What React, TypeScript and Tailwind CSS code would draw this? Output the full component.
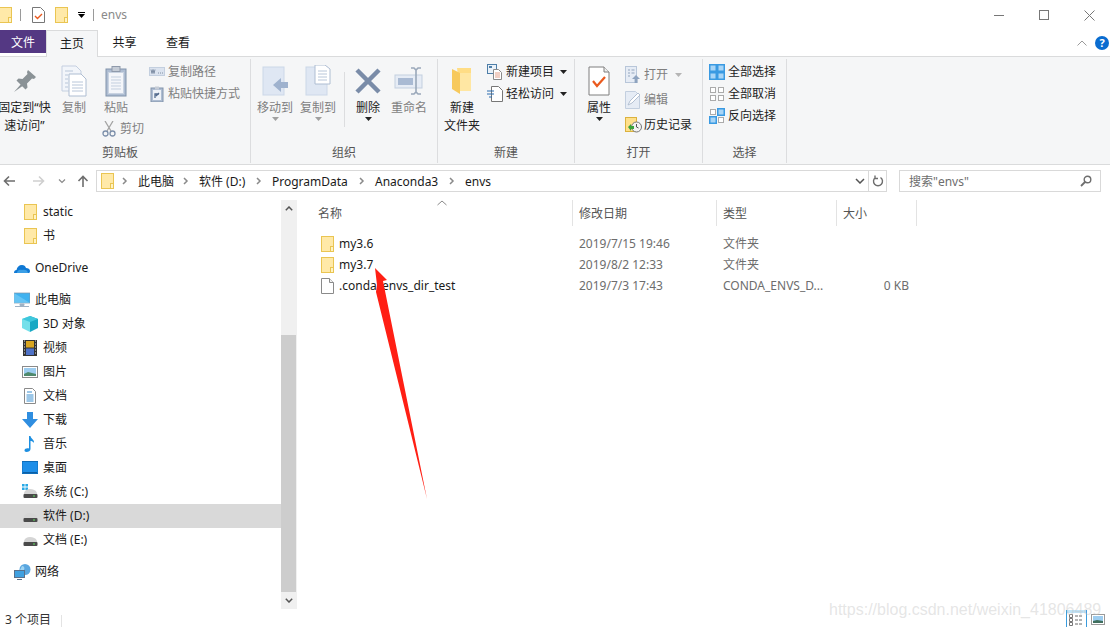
import type { ReactNode } from "react";

const Folder = ({ className = "" }: { className?: string }) => (
  <svg viewBox="0 0 13 16" className={`h-4 w-[13px] shrink-0 ${className}`}>
    <rect x="0.5" y="0.5" width="12" height="15" fill="#ffe9a8" stroke="#eac552" />
    <rect x="9.5" y="10.5" width="3" height="5" fill="#fff3c4" stroke="#eac552" />
  </svg>
);

const Caret = ({ color = "#222" }: { color?: string }) => (
  <svg viewBox="0 0 7 4" className="h-1 w-[7px]">
    <path d="M0 0h7L3.5 4z" fill={color} />
  </svg>
);

const Chevron = ({ color = "#8a8a8a" }: { color?: string }) => (
  <svg viewBox="0 0 6 8" className="h-2 w-1.5">
    <path d="M1 1l3 3-3 3" fill="none" stroke={color} strokeWidth="1.5" />
  </svg>
);

const Pin = () => (
  <svg viewBox="0 0 24 24" className="h-6 w-6">
    <path d="M1 23l8-9 2 2z" fill="#8a9296" />
    <path d="M15 1l8 7-2 2-2-.5-5 5 .5 4-2 2-9-9 2-2 4 .5 5-5-.5-2z" fill="#8a9296" />
  </svg>
);

const CopyDoc = () => (
  <svg viewBox="0 0 26 32" className="h-8 w-[26px]">
    <path d="M1 1h14l5 5v20H1z" fill="#f2f5fa" stroke="#c4cfe0" />
    <path d="M8 9h12l5 5v17H8z" fill="#fff" stroke="#aebdd2" />
    <path d="M4 6h8M4 10h3M4 14h3M4 18h3M4 22h3M11 17h11M11 20h11M11 23h11M11 26h11" stroke="#b8c6d9" />
  </svg>
);

const Clipboard = () => (
  <svg viewBox="0 0 22 32" className="h-8 w-[22px]">
    <rect x="1" y="4" width="20" height="27" fill="#aebdd2" stroke="#8193ab" />
    <rect x="3.5" y="7.5" width="15" height="21" fill="#f4f6fa" stroke="#c9d3e1" />
    <rect x="7" y="1.5" width="8" height="5" fill="#c5ccd6" stroke="#8f9aab" />
    <path d="M6 12h10M6 15h10M6 18h10M6 21h10M6 24h10" stroke="#c3cfdf" />
  </svg>
);

const MoveTo = ({ copy = false }: { copy?: boolean }) => (
  <svg viewBox="0 0 28 32" className="h-8 w-7">
    <rect x="2" y="2" width="21" height="28" fill="#dfe7f3" stroke="#ccd7e8" />
    {copy ? (
      <>
        <path d="M11 0h10l5 4v15H11z" fill="#fff" stroke="#aebdd2" />
        <path d="M14 6h9M14 9h9M14 12h9M14 15h9" stroke="#b8c6d9" />
      </>
    ) : (
      <path d="M12 20l8-7v4h7v6h-7v4z" fill="#9fb2ce" />
    )}
  </svg>
);

const DeleteX = () => (
  <svg viewBox="0 0 26 26" className="h-[26px] w-[26px]">
    <path d="M2 2l22 22M24 2L2 24" stroke="#7a8ca8" strokeWidth="4.5" />
  </svg>
);

const Rename = () => (
  <svg viewBox="0 0 30 28" className="h-7 w-[30px]">
    <rect x="1" y="8" width="27" height="13" fill="#e6ecf5" stroke="#c3cfdf" />
    <rect x="4" y="11" width="15" height="7" fill="#a9bad3" />
    <path d="M17 1h3l2 2 2-2h3M22 3v22M17 27h3l2-2 2 2h3" fill="none" stroke="#9aa8ba" strokeWidth="1.6" />
  </svg>
);

const BigFolder = () => (
  <svg viewBox="0 0 20 28" className="h-7 w-5">
    <path d="M5 1h14v23H8z" fill="#ffdd85" />
    <path d="M0 2l8 4v21l-8-5z" fill="#f7c95c" />
    <path d="M8 6l11 0v18H8z" fill="#ffe7a3" />
  </svg>
);

const Properties = () => (
  <svg viewBox="0 0 22 30" className="h-[30px] w-[22px]">
    <path d="M1 1h15l5 5v23H1z" fill="#fff" stroke="#7f7f7f" />
    <path d="M16 1v5h5" fill="#eee" stroke="#7f7f7f" />
    <path d="M5 15l4 5 8-9" fill="none" stroke="#ea5a1e" strokeWidth="2.2" />
  </svg>
);

const CheckDoc = () => (
  <svg viewBox="0 0 13 16" className="h-4 w-[13px]">
    <path d="M.5.5h8l4 4v11H.5z" fill="#fff" stroke="#777" />
    <path d="M3 9l2.5 2.5L10 7" fill="none" stroke="#ea5a1e" strokeWidth="1.4" />
  </svg>
);

const Cell = ({ x, y, on }: { x: number; y: number; on: boolean }) =>
  on ? (
    <rect x={x + 0.75} y={y + 0.75} width="6.5" height="6.5" fill="#a9d5f6" stroke="#3a9ae2" strokeWidth="1.5" />
  ) : (
    <rect x={x + 1.5} y={y + 1.5} width="5" height="5" fill="#fff" stroke="#ababab" />
  );

const Small = ({ kind }: { kind: string }) => {
  if (kind === "path")
    return (
      <svg viewBox="0 0 16 16" className="h-4 w-4">
        <rect x="0.5" y="3.5" width="15" height="8" fill="#dbe3ef" stroke="#c3cfdf" />
        <path d="M2 5.5l1 4 1-4 1 4 1-4M9 9h1M11 9h1M13 9h1" fill="none" stroke="#6a7b93" strokeWidth="0.8" />
      </svg>
    );
  if (kind === "shortcut")
    return (
      <svg viewBox="0 0 16 16" className="h-4 w-4">
        <rect x="2" y="2" width="12" height="14" fill="#aebdd2" stroke="#8193ab" />
        <rect x="4" y="4" width="8" height="10" fill="#eef2f7" />
        <path d="M6 12V8h4M7 10l3-3" fill="none" stroke="#51698c" strokeWidth="1.3" />
        <rect x="6" y="0.5" width="4" height="3" fill="#c5ccd6" />
      </svg>
    );
  if (kind === "cut")
    return (
      <svg viewBox="0 0 16 16" className="h-4 w-4">
        <path d="M4 0l6 10M12 0L6 10" stroke="#a4a4a4" strokeWidth="1.3" />
        <circle cx="4.5" cy="12.5" r="2.5" fill="none" stroke="#7d90ab" strokeWidth="1.3" />
        <circle cx="11.5" cy="12.5" r="2.5" fill="none" stroke="#7d90ab" strokeWidth="1.3" />
      </svg>
    );
  if (kind === "newitem")
    return (
      <svg viewBox="0 0 16 16" className="h-4 w-4">
        <rect x="0.5" y="0.5" width="9" height="9" fill="#eaf1f8" stroke="#4d7ea8" />
        <rect x="2" y="2" width="3" height="2" fill="#4d7ea8" />
        <path d="M6.5 5.5h5l3 3v7h-8z" fill="#fff" stroke="#8a8a8a" />
        <path d="M8 9h5M8 11h5M8 13h5" stroke="#e4a08a" />
      </svg>
    );
  if (kind === "easy")
    return (
      <svg viewBox="0 0 16 16" className="h-4 w-4">
        <path d="M4.5 0.5h7l4 4v11h-11z" fill="#fff" stroke="#777" />
        <path d="M0 5h7M0 8h7M2 11h3" stroke="#2a6cb0" strokeWidth="1" />
      </svg>
    );
  if (kind === "open")
    return (
      <svg viewBox="0 0 16 18" className="h-[18px] w-4">
        <rect x="0.5" y="0.5" width="11" height="16" fill="#e6ecf5" stroke="#b8c6d9" />
        <path d="M3 4h2M6.5 4h3M3 7h2M6.5 7h3M3 10h2" stroke="#93a5bd" />
        <path d="M11 9l4 4h-2.4v4h-3v-4H7z" fill="#8ea3bf" />
      </svg>
    );
  if (kind === "edit")
    return (
      <svg viewBox="0 0 16 18" className="h-[18px] w-4">
        <path d="M.5.5h10l4 4v13H.5z" fill="#e6ecf5" stroke="#c3cfdf" />
        <path d="M3 14l2-4 8-8 2 2-8 8z" fill="#fff" stroke="#b3c0d2" />
      </svg>
    );
  if (kind === "history")
    return (
      <svg viewBox="0 0 17 16" className="h-4 w-[17px] -mr-px">
        <rect x="0.5" y="0.5" width="11" height="14" fill="#ffe08a" stroke="#dbb23f" />
        <circle cx="11.5" cy="10" r="5" fill="#f2f2f2" stroke="#777" />
        <path d="M11.5 7v3l2 1" fill="none" stroke="#555" />
        <path d="M3 10l3-3v2h3v3H6v2z" fill="#3aa23a" />
      </svg>
    );
  return (
    <svg viewBox="0 0 16 16" className="h-4 w-4">
      <Cell x={0} y={0} on={kind === "all"} />
      <Cell x={8} y={0} on={kind !== "none"} />
      <Cell x={0} y={8} on={kind !== "none"} />
      <Cell x={8} y={8} on={kind === "all"} />
    </svg>
  );
};

const Large = ({ icon, lines, width, dark, caret }: { icon: ReactNode; lines: string[]; width: string; dark?: boolean; caret?: string }) => (
  <div className={`flex shrink-0 flex-col items-center ${width}`}>
    <div className="flex h-[37px] items-center justify-center">{icon}</div>
    {lines.map((l) => (
      <span key={l} className={`h-[18px] whitespace-nowrap leading-[18px] ${dark ? "text-[#222]" : "text-[#7f7f7f]"}`}>
        {l}
      </span>
    ))}
    {caret && <Caret color={caret} />}
  </div>
);

const Item = ({ kind, label, dark, h = "h-[22px]", children }: { kind: string; label: string; dark?: boolean; h?: string; children?: ReactNode }) => (
  <div className={`flex items-center gap-[3px] whitespace-nowrap ${h} ${dark ? "text-[#222]" : "text-[#7f7f7f]"}`}>
    <Small kind={kind} />
    <span>{label}</span>
    {children}
  </div>
);

const Group = ({ label, width, pad = "", children }: { label: string; width: string; pad?: string; children: ReactNode }) => (
  <section className={`flex h-[104px] shrink-0 flex-col border-r border-[#dcdddf] ${width}`}>
    <div className="flex h-[84px] pt-[3px]">{children}</div>
    <div className={`text-center leading-[20px] text-[#555] ${pad}`}>{label}</div>
  </section>
);

const crumbs = [
  { label: "此电脑", w: "w-[61px]" },
  { label: "软件 (D:)", w: "w-[73px]" },
  { label: "ProgramData", w: "w-[103px]" },
  { label: "Anaconda3", w: "w-[90px]" },
  { label: "envs", w: "w-[60px]" },
];

const Drive = ({ win }: { win?: boolean }) => (
  <svg viewBox="0 0 16 16" className="h-4 w-4">
    {win && <path d="M0 0h2.6v2.6H0zM3.4 0H6v2.6H3.4zM0 3.4h2.6V6H0zM3.4 3.4H6V6H3.4z" fill="#29a9e6" />}
    <path d="M2 9c1-3 3-4 6-4s6 1 7 4v1H2z" fill="#d5d5d5" />
    <rect x="1.5" y="10" width="14" height="4" rx="1" fill="#4a4a4a" />
    <rect x="11" y="11.5" width="2" height="1" fill="#5fe05f" />
  </svg>
);

const navIcons: Record<string, ReactNode> = {
  onedrive: (
    <svg viewBox="0 0 16 16" className="h-4 w-4">
      <path d="M0 13c0-2 1-3 2.5-3C3 7 5 5 8 5c2 0 3.500 1 4 3 2 0 4 1 4 3s-1 2-2 2z" fill="#0f78d4" />
      <path d="M3 13c0-2 2-4 5-3 2-1 6 0 6 3z" fill="#3b9fe6" />
    </svg>
  ),
  pc: (
    <svg viewBox="0 0 16 16" className="h-4 w-4">
      <rect x="0" y="1" width="16" height="10" fill="#3fb2f0" stroke="#7c93a8" strokeWidth="0.7" />
      <path d="M0 11h16L0 1z" fill="#7fd0f7" opacity="0.6" />
      <path d="M6 12h4v1.500H6zM1 14.500h14" stroke="#9fb2c4" fill="#9fb2c4" />
    </svg>
  ),
  cube: (
    <svg viewBox="0 0 16 16" className="h-4 w-4">
      <path d="M8 0l8 3v9l-8 4z" fill="#19a9c4" />
      <path d="M8 0L0 3v9l8 4z" fill="#74e0ea" />
      <path d="M0 3l8 3 8-3-8-3z" fill="#3fc7dc" />
    </svg>
  ),
  video: (
    <svg viewBox="0 0 16 16" className="h-4 w-4">
      <rect x="1" y="0" width="14" height="16" fill="#333" />
      <rect x="4" y="1" width="8" height="6.500" fill="#d9a520" />
      <rect x="4" y="8.500" width="8" height="6.500" fill="#4f72c8" />
      <path d="M2 1h1M2 4h1M2 7h1M2 10h1M2 13h1M13 1h1M13 4h1M13 7h1M13 10h1M13 13h1" stroke="#ddd" />
    </svg>
  ),
  picture: (
    <svg viewBox="0 0 16 16" className="h-4 w-4">
      <rect x="0.500" y="2.500" width="15" height="11" fill="#fff" stroke="#8a8a8a" />
      <rect x="2" y="4" width="12" height="8" fill="#9dcdf0" />
      <path d="M2 10l4-2 8 2v2H2z" fill="#4f8a6d" />
    </svg>
  ),
  doc: (
    <svg viewBox="0 0 16 16" className="h-4 w-4">
      <path d="M2.500.5h8l3 3v12h-11z" fill="#fff" stroke="#8a8a8a" />
      <path d="M5 4h5M4.500 7h7M4.500 9h7M4.500 11h7M4.500 13h7" stroke="#3a8fd0" />
    </svg>
  ),
  download: (
    <svg viewBox="0 0 16 16" className="h-4 w-4">
      <path d="M5 0h6v7h5l-8 9-8-9h5z" fill="#2f8ee0" />
    </svg>
  ),
  music: (
    <svg viewBox="0 0 16 16" className="h-4 w-4">
      <path d="M7 0h1.500c.3 3 4 3.500 3.500 7-1-1.500-2.500-2-3.500-2v8c0 2-2 3-4 3-1.500 0-2-1-2-1.500C2.500 12.500 5 12 7 12.500z" fill="#1d8fe1" />
    </svg>
  ),
  desktop: (
    <svg viewBox="0 0 16 16" className="h-4 w-4">
      <rect x="0" y="1.500" width="16" height="12" fill="#1f8fe8" stroke="#0f6db8" />
      <rect x="1" y="12" width="14" height="1" fill="#0b5fa5" />
    </svg>
  ),
  net: (
    <svg viewBox="0 0 18 16" className="h-4 w-[18px]">
      <circle cx="11" cy="5.500" r="5.500" fill="#5aa7e0" />
      <path d="M8 2c2 0 3 2 2 4s-3 1-4 0z" fill="#9fd4f2" />
      <rect x="0.500" y="6.500" width="10" height="7" fill="#3fa0e0" stroke="#58708c" />
      <path d="M3 15.500h5" stroke="#58708c" />
    </svg>
  ),
};

const tree = [
  { label: "static", icon: <Folder className="ml-0.5" />, pl: "pl-[22px]" },
  { label: "书", icon: <Folder className="ml-0.5" />, pl: "pl-[22px]" },
  { label: "OneDrive", icon: navIcons.onedrive, pl: "pl-3.5", mt: "mt-2" },
  { label: "此电脑", icon: navIcons.pc, pl: "pl-3.5", mt: "mt-2" },
  { label: "3D 对象", icon: navIcons.cube, pl: "pl-[22px]" },
  { label: "视频", icon: navIcons.video, pl: "pl-[22px]" },
  { label: "图片", icon: navIcons.picture, pl: "pl-[22px]" },
  { label: "文档", icon: navIcons.doc, pl: "pl-[22px]" },
  { label: "下载", icon: navIcons.download, pl: "pl-[22px]" },
  { label: "音乐", icon: navIcons.music, pl: "pl-[22px]" },
  { label: "桌面", icon: navIcons.desktop, pl: "pl-[22px]" },
  { label: "系统 (C:)", icon: <Drive win />, pl: "pl-[22px]" },
  { label: "软件 (D:)", icon: <Drive />, pl: "pl-[22px]", active: true },
  { label: "文档 (E:)", icon: <Drive />, pl: "pl-[22px]" },
  { label: "网络", icon: navIcons.net, pl: "pl-3.5", mt: "mt-2" },
];

const files = [
  { name: "my3.6", date: "2019/7/15 19:46", type: "文件夹", size: "" },
  { name: "my3.7", date: "2019/8/2 12:33", type: "文件夹", size: "" },
  { name: ".conda_envs_dir_test", date: "2019/7/3 17:43", type: "CONDA_ENVS_D...", size: "0 KB", plain: true },
];

export default function App() {
  return (
    <div className="relative flex h-[627px] w-[1110px] flex-col overflow-hidden bg-white font-['Noto_Sans','Noto_Sans_CJK_SC',sans-serif] text-[12px] text-[#1a1a1a]">
      {/* title bar */}
      <div className="flex h-[30px] shrink-0 items-center">
        <Folder className="-ml-[1px]" />
        <span className="ml-2 h-3 w-px bg-[#9a9a9a]" />
        <span className="ml-[11px]"><CheckDoc /></span>
        <Folder className="ml-2.5" />
        <span className="ml-2.5 flex flex-col items-center gap-px">
          <span className="h-px w-[7px] bg-black" />
          <Caret color="#000" />
        </span>
        <span className="ml-2 h-3 w-px bg-[#9a9a9a]" />
        <span className="ml-[7px] text-[#8a8a8a]">envs</span>
        <div className="ml-auto flex items-center pr-[15px]">
          <span className="h-px w-2.5 bg-[#777]" />
          <span className="ml-[35px] h-2.5 w-2.5 border border-[#777]" />
          <svg viewBox="0 0 11 11" className="ml-[35px] h-[11px] w-[11px]">
            <path d="M.5.5l10 10M10.500.5l-10 10" stroke="#777" />
          </svg>
        </div>
      </div>

      {/* tabs */}
      <div className="flex h-[27px] shrink-0 border-b border-[#dadbdc]">
        <div className="flex h-[23px] w-[46px] items-center justify-center bg-[#543883] pt-[3px] text-white">文件</div>
        <div className="flex h-[27px] w-[52px] items-center justify-center border-x border-t border-[#dadbdc] bg-[#f5f6f7]">主页</div>
        <div className="flex h-[26px] w-[53px] items-center justify-center">共享</div>
        <div className="flex h-[26px] w-[54px] items-center justify-center">查看</div>
        <div className="ml-auto flex h-[26px] items-center gap-2 pr-px">
          <svg viewBox="0 0 10 6" className="h-1.5 w-2.5">
            <path d="M.5 5.500L5 1l4.500 4.500" fill="none" stroke="#9a9a9a" />
          </svg>
          <span className="flex h-3.5 w-3.5 items-center justify-center rounded-full bg-[#0a6cd0] text-[11px] font-bold text-white">?</span>
        </div>
      </div>

      {/* ribbon */}
      <div className="flex h-[108px] shrink-0 items-start border-b border-[#dadbdc] bg-[#f5f6f7] pt-0.5">
        <Group label="剪贴板" width="w-[251px]" pad="pr-2.5">
          <Large width="w-[49px]" dark icon={<Pin />} lines={["固定到“快", "速访问”"]} />
          <Large width="w-[50px]" icon={<CopyDoc />} lines={["复制"]} />
          <div className="flex w-[50px] shrink-0 flex-col">
            <Large width="w-[34px]" icon={<Clipboard />} lines={["粘贴"]} />
            <Item kind="cut" label="剪切" h="h-[22px] mt-px ml-[2px]" />
          </div>
          <div className="-mt-px flex flex-col">
            <Item kind="path" label="复制路径" />
            <Item kind="shortcut" label="粘贴快捷方式" />
          </div>
        </Group>
        <Group label="组织" width="w-[187px]">
          <Large width="w-[48px]" icon={<MoveTo />} lines={["移动到"]} caret="#a0a0a0" />
          <Large width="w-[38px]" icon={<MoveTo copy />} lines={["复制到"]} caret="#a0a0a0" />
          <span className="ml-[7px] mt-2.5 h-[55px] w-px bg-[#dcdddf]" />
          <div className="-ml-px">
            <Large width="w-[48px]" dark icon={<DeleteX />} lines={["删除"]} caret="#222" />
          </div>
          <Large width="w-[34px]" icon={<Rename />} lines={["重命名"]} />
        </Group>
        <Group label="新建" width="w-[137px]">
          <Large width="w-[48px]" dark icon={<BigFolder />} lines={["新建", "文件夹"]} />
          <div className="-mt-px flex flex-col pl-px">
            <Item kind="newitem" label="新建项目" dark>
              <span className="ml-[3px]"><Caret /></span>
            </Item>
            <Item kind="easy" label="轻松访问" dark>
              <span className="ml-[3px]"><Caret /></span>
            </Item>
          </div>
        </Group>
        <Group label="打开" width="w-[128px]">
          <Large width="w-[48px]" dark icon={<Properties />} lines={["属性"]} caret="#222" />
          <div className="flex flex-col pl-0.5">
            <Item kind="open" label="打开" h="h-[25px]">
              <span className="ml-1"><Caret color="#b5b5b5" /></span>
            </Item>
            <Item kind="edit" label="编辑" h="h-[25px]" />
            <Item kind="history" label="历史记录" dark h="h-[25px]" />
          </div>
        </Group>
        <Group label="选择" width="w-[84px]">
          <div className="-mt-px flex flex-col pl-1.5">
            <Item kind="all" label="全部选择" dark />
            <Item kind="none" label="全部取消" dark />
            <Item kind="invert" label="反向选择" dark />
          </div>
        </Group>
      </div>

      {/* address bar */}
      <div className="flex h-[31px] shrink-0 items-start pt-[5px]">
        <div className="flex h-[22px] w-[96px] shrink-0 items-center">
          <svg viewBox="0 0 12 12" className="ml-[3px] h-3 w-3">
            <path d="M6 1.500L1.500 6 6 10.500M1.500 6H12" fill="none" stroke="#6e6e6e" strokeWidth="1.6" />
          </svg>
          <svg viewBox="0 0 12 12" className="ml-[18px] h-3 w-3">
            <path d="M6 1.500L10.500 6 6 10.500M10.500 6H0" fill="none" stroke="#cfcfcf" strokeWidth="1.6" />
          </svg>
          <svg viewBox="0 0 8 5" className="ml-[13px] h-[5px] w-2">
            <path d="M1 .5l3 3 3-3" fill="none" stroke="#8a8a8a" strokeWidth="1.2" />
          </svg>
          <svg viewBox="0 0 12 12" className="ml-[11px] h-3 w-3">
            <path d="M1.500 6L6 1.500 10.500 6M6 1.500V12" fill="none" stroke="#6e6e6e" strokeWidth="1.6" />
          </svg>
        </div>
        <div className="flex h-[22px] w-[791px] shrink-0 items-center border border-[#d9d9d9]">
          <Folder className="ml-1" />
          <div className="ml-[5px] flex items-center">
            {crumbs.map((c) => (
              <div key={c.label} className={`flex items-center ${c.w}`}>
                <span className="flex w-[19px] shrink-0 pl-[3px]">
                  <Chevron />
                </span>
                <span className="whitespace-nowrap pt-px">{c.label}</span>
              </div>
            ))}
          </div>
          <div className="ml-auto flex h-full items-center">
            <svg viewBox="0 0 10 6" className="mr-[3px] h-1.5 w-2.5">
              <path d="M1 1l4 4 4-4" fill="none" stroke="#555" strokeWidth="1.5" />
            </svg>
            <div className="flex h-full w-[18px] items-center justify-center border-l border-[#d9d9d9]">
              <svg viewBox="0 0 12 12" className="h-3 w-3">
                <path d="M3.500 2.500a4.500 4.500 0 1 0 5 0M3 .5v3h3" fill="none" stroke="#6e6e6e" strokeWidth="1.4" />
              </svg>
            </div>
          </div>
        </div>
        <div className="ml-3 flex h-[22px] w-[202px] shrink-0 items-center justify-between border border-[#d9d9d9] pl-[9px] pr-2 text-[#6e6e6e]">
          <span className="pt-px">搜索"envs"</span>
          <svg viewBox="0 0 12 12" className="h-3 w-3">
            <circle cx="7.500" cy="4.500" r="3.300" fill="none" stroke="#6e6e6e" strokeWidth="1.4" />
            <path d="M5 7l-4 4" stroke="#6e6e6e" strokeWidth="1.8" />
          </svg>
        </div>
      </div>

      {/* main */}
      <div className="flex h-[414px] shrink-0 pt-1">
        <nav className="w-[281px] shrink-0">
          {tree.map((t) => (
            <div key={t.label} className={`flex h-6 items-center ${t.pl} ${t.mt ?? ""} ${t.active ? "bg-[#d9d9d9]" : ""}`}>
              <span className="flex w-[21px] shrink-0 items-center">{t.icon}</span>
              <span className="whitespace-nowrap">{t.label}</span>
            </div>
          ))}
        </nav>
        <div className="flex h-[409px] w-4 shrink-0 flex-col bg-[#f0f0f0]">
          <div className="flex h-[17px] items-center justify-center">
            <svg viewBox="0 0 8 5" className="h-[5px] w-2">
              <path d="M.8 4.200L4 1l3.200 3.200" fill="none" stroke="#555" strokeWidth="1.5" />
            </svg>
          </div>
          <div className="mt-[118px] h-[257px] w-[15px] bg-[#cdcdcd]" />
          <div className="flex h-[17px] items-center justify-center">
            <svg viewBox="0 0 8 5" className="h-[5px] w-2">
              <path d="M.8.8L4 4l3.200-3.200" fill="none" stroke="#555" strokeWidth="1.5" />
            </svg>
          </div>
        </div>
        <div className="ml-px flex-1">
          <div className="relative flex h-[26px] text-[#555]">
            <svg viewBox="0 0 10 6" className="absolute left-[139px] top-0 h-1.5 w-2.5">
              <path d="M.5 5L5 1l4.500 4" fill="none" stroke="#8a8a8a" />
            </svg>
            <div className="flex w-[275px] items-center border-r border-[#e3e3e3] pl-5 pt-0.5">名称</div>
            <div className="flex w-[144px] items-center border-r border-[#e3e3e3] pl-1.5 pt-0.5">修改日期</div>
            <div className="flex w-[120px] items-center border-r border-[#e3e3e3] pl-1.5 pt-0.5">类型</div>
            <div className="flex w-[80px] items-center border-r border-[#e3e3e3] pl-1.5 pt-0.5">大小</div>
          </div>
          <div className="mt-[7px]">
            {files.map((f) => (
              <div key={f.name} className="flex h-[21px] items-center">
                <div className="flex w-[275px] items-center pl-[23px]">
                  {f.plain ? (
                    <svg viewBox="0 0 13 16" className="h-4 w-[13px]">
                      <path d="M.5.5h8l4 4v11H.5z" fill="#fff" stroke="#8a8a8a" />
                      <path d="M8.500.5v4h4" fill="#f0f0f0" stroke="#8a8a8a" />
                    </svg>
                  ) : (
                    <Folder />
                  )}
                  <span className="ml-[5px] whitespace-nowrap">{f.name}</span>
                </div>
                <div className="w-[144px] pl-1.5 text-[#6d6d6d]">{f.date}</div>
                <div className="w-[120px] pl-1.5 text-[#6d6d6d]">{f.type}</div>
                <div className="w-[80px] pr-2 text-right text-[#6d6d6d]">{f.size}</div>
              </div>
            ))}
          </div>
        </div>
      </div>

      {/* status bar */}
      <div className="flex h-[17px] shrink-0 items-start overflow-hidden pl-[5px] text-[#333]">
        <span className="w-[56px] pt-[3px] leading-[14px]">3 个项目</span>
        <span className="h-3 w-px self-end bg-[#e3e3e3]" />
        <div className="ml-auto flex items-end gap-1 self-end pr-[5px]">
          <svg viewBox="0 0 21 18" className="h-[18px] w-[21px]">
            <path d="M.5 18V.5h20V18" fill="#fff" stroke="#3a9bdc" />
            <rect x="1" y="1" width="19" height="3" fill="#bfe3f8" />
            <path d="M3.500 5.500h3v3h-3zM3.500 9.500h3v3h-3zM3.500 13.500h3v3h-3z" fill="#fff" stroke="#777" />
            <path d="M9 7h3M13 7h3M9 11h3M13 11h3M9 15h3M13 15h3" stroke="#666" />
          </svg>
          <svg viewBox="0 0 14 11" className="mb-0.5 h-[11px] w-3.5">
            <rect x="0.500" y="0.500" width="13" height="10" fill="#fff" stroke="#9a9a9a" />
            <rect x="2" y="2" width="10" height="7" fill="#9dcdf0" />
            <path d="M2 7l4-1 6 1v2H2z" fill="#3f6f5e" />
          </svg>
        </div>
      </div>

      {/* pasted annotation and watermark */}
      <svg viewBox="0 0 1110 627" className="pointer-events-none absolute inset-0 h-[627px] w-[1110px]">
        <path d="M375 268l12 12-4 1 44 218-51-207 1-7z" fill="#ff1f14" />
      </svg>
      <span className="pointer-events-none absolute left-[829px] top-[598px] whitespace-nowrap font-['Liberation_Sans',sans-serif] text-[16px] text-[#bdbdbd]/40">
        https://blog.csdn.net/weixin_41806489
      </span>
    </div>
  );
}
